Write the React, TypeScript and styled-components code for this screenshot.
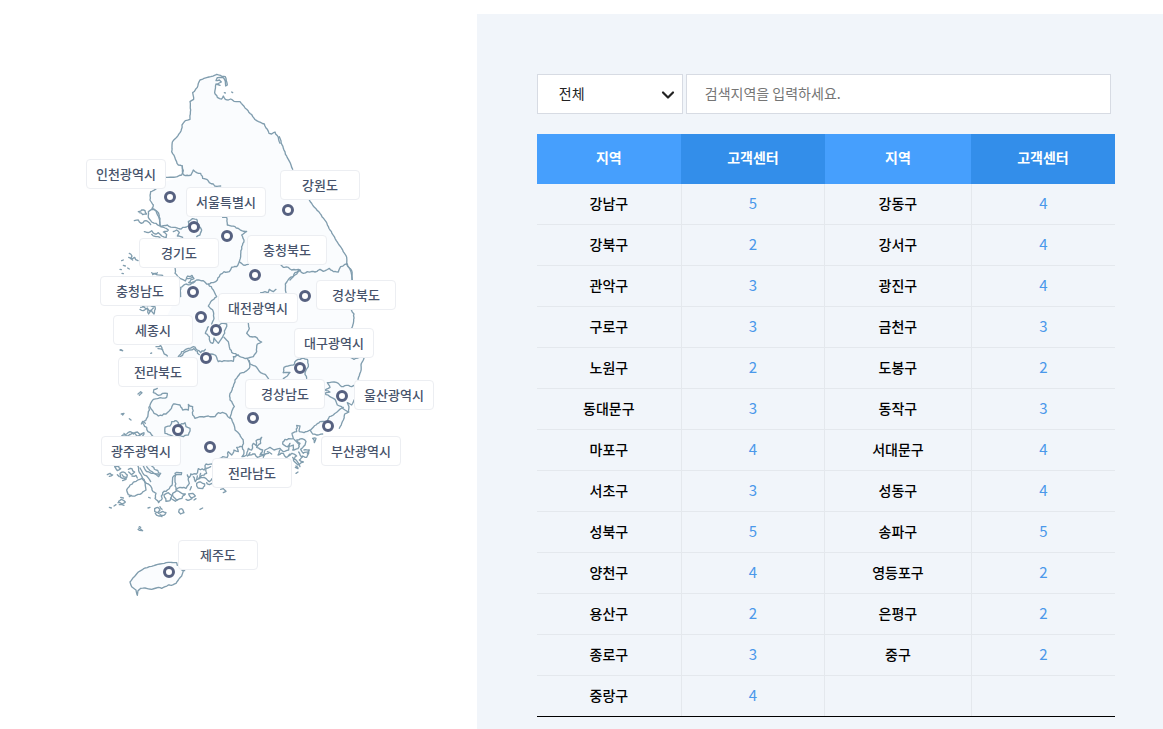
import React from 'react';
import styled, { createGlobalStyle } from 'styled-components';

const GlobalStyle = createGlobalStyle`
  *, *::before, *::after { box-sizing: border-box; }
  body {
    margin: 0;
    background: #fff;
    color: #000;
    font-family: "Noto Sans CJK KR", "Noto Sans", sans-serif;
    font-size: 14px;
  }
  button, input, select { font-family: inherit; }
`;

const Page = styled.main`
  display: flex;
  align-items: flex-start;
  padding-top: 14px;
`;

const MapPanel = styled.section`
  flex: 0 0 41%;
  padding: 46px 0 0 60px;
`;

const MapCanvas = styled.div`
  position: relative;
  width: 380px;
  height: 560px;
`;

const MapDrawing = styled.svg`
  display: block;
  width: 100%;
  height: 100%;
`;

const RegionLabel = styled.button<{ $x: number; $y: number }>`
  position: absolute;
  left: ${(p) => p.$x - 60}px;
  top: ${(p) => p.$y - 60}px;
  width: 80px;
  height: 30px;
  padding: 0;
  border: 1px solid #eceef2;
  border-radius: 4px;
  background: #fff;
  color: #47536b;
  font-size: 13px;
  font-weight: 500;
  line-height: 28px;
  text-align: center;
  white-space: nowrap;
  cursor: pointer;
`;

const Pin = styled.span<{ $x: number; $y: number }>`
  position: absolute;
  left: ${(p) => p.$x - 66}px;
  top: ${(p) => p.$y - 66}px;
  width: 12px;
  height: 12px;
  border: 3px solid #566180;
  border-radius: 50%;
  background: #fff;
`;

const ListPanel = styled.section`
  flex: 1;
  min-width: 0;
  padding: 60px 48px 12px 60px;
  background: #f1f5fa;
`;

const SearchBar = styled.form`
  display: flex;
  gap: 3px;
  margin: 0 4px 20px 0;
`;

const SelectBox = styled.div`
  position: relative;
  flex: 0 0 146px;
`;

const RegionSelect = styled.select`
  display: block;
  width: 100%;
  height: 40px;
  padding: 0 32px 2px 21px;
  border: 1px solid #d7dbe3;
  border-radius: 0;
  background: #fff;
  color: #222;
  font-size: 14px;
  appearance: none;
`;

const SelectArrow = styled.svg`
  position: absolute;
  top: 16px;
  right: 8px;
  width: 14px;
  height: 10px;
  pointer-events: none;
`;

const SearchInput = styled.input`
  flex: 1;
  min-width: 0;
  height: 40px;
  padding: 0 18px 2px;
  border: 1px solid #d7dbe3;
  border-radius: 0;
  background: #fff;
  color: #222;
  font-size: 14px;
  &::placeholder { color: #757575; opacity: 1; }
`;

const CenterTable = styled.table`
  width: 100%;
  table-layout: fixed;
  border-collapse: separate;
  border-spacing: 0;
  border-bottom: 1px solid #000;
`;

const WideCol = styled.col`
  width: 146px;
`;

const HeadCell = styled.th<{ $dark?: boolean }>`
  height: 50px;
  padding: 0 0 4px;
  background: ${(p) => (p.$dark ? '#338eea' : '#469ffd')};
  color: #fff;
  font-size: 14px;
  font-weight: 700;
  line-height: 20px;
`;

const NameCell = styled.td`
  height: 41px;
  padding: 0 0 2px;
  font-size: 14px;
  font-weight: 500;
  line-height: 20px;
  text-align: center;
`;

const CountCell = styled.td<{ $closed?: boolean }>`
  height: 41px;
  padding: 0 0 2px;
  border-left: 1px solid #e4e8ed;
  border-right: ${(p) => (p.$closed ? '1px solid #e4e8ed' : '0')};
  color: #4a98ea;
  font-size: 15px;
  line-height: 20px;
  text-align: center;
`;

const BodyRow = styled.tr`
  &:not(:last-child) > td { border-bottom: 1px solid #e4e8ed; }
  &:last-child > td { height: 40px; }
`;

type Region = { name: string; x: number; y: number; px: number; py: number };

const regions: Region[] = [
  { name: '인천광역시', x: 86, y: 159, px: 170, py: 197 },
  { name: '서울특별시', x: 186, y: 187, px: 194, py: 227 },
  { name: '강원도', x: 280, y: 170, px: 288, py: 210 },
  { name: '경기도', x: 139, y: 238, px: 227, py: 236 },
  { name: '충청북도', x: 247, y: 235, px: 255, py: 275 },
  { name: '충청남도', x: 100, y: 276, px: 193, py: 292 },
  { name: '경상북도', x: 316, y: 280, px: 305, py: 296 },
  { name: '대전광역시', x: 218, y: 293, px: 216, py: 330 },
  { name: '세종시', x: 113, y: 315, px: 201, py: 317 },
  { name: '대구광역시', x: 294, y: 328, px: 300, py: 368 },
  { name: '전라북도', x: 118, y: 357, px: 206, py: 358 },
  { name: '경상남도', x: 245, y: 379, px: 253, py: 418 },
  { name: '울산광역시', x: 354, y: 380, px: 342, py: 396 },
  { name: '광주광역시', x: 101, y: 436, px: 178, py: 430 },
  { name: '부산광역시', x: 321, y: 436, px: 328, py: 426 },
  { name: '전라남도', x: 212, y: 458, px: 210, py: 447 },
  { name: '제주도', x: 178, y: 540, px: 169, py: 572 },
];

const rows: [string, number, string?, number?][] = [
  ['강남구', 5, '강동구', 4],
  ['강북구', 2, '강서구', 4],
  ['관악구', 3, '광진구', 4],
  ['구로구', 3, '금천구', 3],
  ['노원구', 2, '도봉구', 2],
  ['동대문구', 3, '동작구', 3],
  ['마포구', 4, '서대문구', 4],
  ['서초구', 3, '성동구', 4],
  ['성북구', 5, '송파구', 5],
  ['양천구', 4, '영등포구', 2],
  ['용산구', 2, '은평구', 2],
  ['종로구', 3, '중구', 2],
  ['중랑구', 4],
];

// Each sheet holds outlines drawn at three times the map's scale.
type Sheet = { x: number; y: number; rough: number; lines: string[] };

const sheets: Sheet[] = [
  {
    x: 80, y: 60, rough: 2,
    lines: [
      '258,352 292,350 305,345 310,332 307,318 295,315 275,275 277,246 290,232 303,213 306,195 316,182 330,178 332,150 330,125 341,118 338,98 352,82 360,60 372,55 392,50 410,43 425,49 436,50 442,75 437,78 436,65 428,52 412,53 408,62 418,60 424,66 412,72 420,76 408,72 404,98 412,112 425,117 430,108 436,118 445,120 452,117 462,124 480,125 500,148 530,182 553,192 562,208 567,220 575,222 585,216 595,232 600,250',
      '307,318 308,340 316,347 333,345 340,330 350,338 362,340 368,355 380,358 388,368 400,372 404,378 422,378',
      '433,98 436,99', '455,96 458,98',
    ],
  },
  {
    x: 220, y: 60, rough: 2,
    lines: [
      '178,230 190,265 205,298 218,328',
      '268,420 280,438 300,460 318,485 330,510 345,535 365,565 380,592 380,612 395,632 396,660',
      '8,472 20,472 22,495 45,500 65,512 80,514 65,525 72,540 65,560 62,590 58,605 70,615 85,613',
      '58,605 50,620 35,622',
      '183,615 190,622 205,622 215,630 235,628 250,640 262,635 285,636 300,628 310,634 328,625 340,635 355,636 362,620 380,612',
      '240,630 225,638 218,652 210,660',
    ],
  },
  {
    x: 80, y: 180, rough: 3,
    lines: [
      '228,27 212,35 210,60 220,75 216,85 232,95 240,115 243,140',
      '205,95 215,88 228,92 236,110 239,138 228,130 215,126 205,112 205,95',
      '175,95 185,90 195,92 200,102 188,104 178,98', '163,122 175,120 184,130 198,122 208,128 212,134',
      '193,155 205,158 215,152 225,162 235,158 245,168 258,172', '215,163 228,170 240,172',
      '243,140 255,144 265,150 250,156 260,164 258,172',
      '243,140 262,135 280,142 300,147 315,142 325,138 325,125 338,116 350,118 352,130 365,150 360,165 350,170',
      '280,155 290,150 298,158 292,168 308,172',
      '285,262 285,280 300,295 316,303 320,292 336,286 342,296 332,300 326,308 345,305',
      '320,296 338,292', '302,350 302,322 318,312 330,314 350,300 370,302 380,312 400,308 412,300 418,290 432,275 448,275 455,262',
      '385,312 400,330 410,350 395,362 385,378 400,395 402,415 395,432',
      '385,440 376,460 388,470 390,484 398,490 402,474 415,490 425,475 434,460 440,432 425,430 418,435',
      '432,472 445,485 450,508 460,520 480,530 501,535',
      '294,532 305,515 325,505 340,500 352,510 362,518 376,508',
      '298,536 310,520 328,510 342,506 358,524',
      '392,522 405,525 415,545 432,542 460,544 460,530 475,525',
      '228,500 242,497 250,515 262,528', '234,506 248,508',
      '182,382 198,376 225,380 222,402 214,390 206,402 202,384 190,392 180,388', '190,380 210,394 220,384',
      '148,220 156,228 152,236 164,232 174,242', '146,232 158,240',
      '215,278 230,284 248,286', '218,284 232,278',
      '125,242 130,240', '130,256 136,258', '120,268 124,269', '143,264 148,267', '126,280 130,281', '122,509 127,512', '212,520 215,519',
    ],
  },
  {
    x: 230, y: 240, rough: 2,
    lines: [
      '352,72 363,95 367,120', '168,158 166,132 178,115 195,105 210,92',
      '92,158 105,155 115,157 118,148 130,155 138,148',
      '364,210 372,222 370,250 365,265', '363,353 372,358 388,352', '402,355 393,375 392,395 384,418',
      '55,250 58,265 50,280 60,290 75,290 85,300 95,306 82,312 80,335 70,350 51,355',
      '58,362 60,372 80,382 92,398 105,403 116,417',
      '160,398 162,382 175,378 190,375 198,362 215,355 232,358 235,380 225,398 230,415', '160,398 180,397 172,408 160,416',
      '372,436 365,440 350,436 335,440 325,430 312,426 292,428 300,442 285,450 300,456 285,460 300,470 315,478 322,495 335,500 345,510 356,516',
      '372,480 365,495 352,488 357,500 356,516 344,522 340,540 328,565',
      '340,502 322,515 310,525 298,530 290,545 270,545 258,555 250,562 242,570',
    ],
  },
  {
    x: 80, y: 340, rough: 3,
    lines: [
      '501,55 509,72 508,85 495,95 480,100 465,120 460,140 450,160 450,180 463,200 455,215 450,232 460,250 465,270 480,285 490,305 487,320',
      '232,145 222,148 220,158 235,166 248,160 262,160 260,172 235,175 220,178 212,190 205,215 200,235 187,248 200,262 204,275 218,288',
      '210,200 222,220 235,228 258,222 270,210 280,192 300,195 308,210 325,210 325,193 338,200 338,225 345,235 360,230 385,228 405,230 415,218 435,220 450,235',
      '255,280 255,262 270,258 275,245 290,243 300,255 315,248 318,260 330,265 325,285 310,290 295,286 280,290 265,284 255,280',
      '184,252 188,244 196,250',
      '125,288 140,282 150,275 160,282 172,276 180,284 192,278 188,288', '132,280 145,288 158,278 170,288 186,282',
      '487,320 470,322 475,335 462,330 455,345 445,335 442,352 428,350 420,355',
      '487,320 492,340 486,350 500,345 505,325 515,330 520,310 530,318 528,302 545,292 542,310 530,322 548,330 540,345 565,340',
      '397,372 378,372 372,390 355,386 350,402 332,402 328,412 322,405 328,430 318,445 300,442 288,450 285,420 285,400 305,398 304,404 290,404 278,412 276,436 262,450 248,458 244,480 236,488 225,475 228,460 216,450 212,438 200,430 186,410 176,392 174,378',
      '190,378 200,395 220,400 236,410 242,400 228,390 215,378', '200,380 210,392 226,402 238,404', '180,384 190,402 200,408 212,425',
      '140,450 150,435 165,425 185,415 195,425 198,450 185,460 165,468 145,464 140,450',
      '252,465 265,458 275,466 270,482 258,484 252,465', '278,460 290,452 302,458 316,462 306,475 292,480 280,470 278,460',
      '272,474 286,484 296,478', '350,430 362,426 374,432 368,446 354,444 350,430', '352,418 366,406 380,400 378,385 392,380', '362,400 356,415 372,412 388,425 396,416',
      '340,410 346,425 352,408', '380,428 388,434 396,430', '326,462 338,460 346,468 334,474 326,462', '318,478 328,480 336,476', '330,450 334,440',
      '224,506 234,502 240,510 234,518 224,514 224,506', '236,520 248,514 258,518 252,526 240,524', '226,520 236,528 246,530', '240,500 246,508',
      '298,508 308,508 312,518 302,522 296,516 298,508',
      '120,400 130,396 142,405 136,418 122,412 120,400', '126,404 138,412', '145,388 156,386 164,396 154,404 146,396', '104,380 116,378 122,386 112,392 104,380',
      '82,404 90,400 98,405 88,409', '112,404 118,410', '128,422 138,418', '156,408 168,406 172,414',
      '116,484 124,478 136,486 126,492 114,488', '118,494 132,496', '122,472 130,474', '88,502 94,504', '102,498 108,494', '148,470 154,466',
      '174,162 182,155 186,158 178,166', '124,222 132,220 128,225', '148,236 153,240', '120,30 128,32', '174,568 186,572', '178,560 182,562',
      '422,448 430,446 438,454 430,458', '360,508 368,504', '342,480 348,476', '204,504 210,502', '206,472 211,474',
    ],
  },
  {
    x: 230, y: 370, rough: 3,
    lines: [
      '278,192 265,195 248,192 240,180 222,188 208,185 210,168 200,166 200,185 186,190 190,206 165,208 158,222 172,230 180,220 176,240 160,245 150,235 132,240 120,232 105,240 100,262',
      '112,245 125,252', '60,248 52,258 75,252 82,262 100,256', '150,240 144,255 160,250 168,262 180,252',
      '172,230 190,225 188,240 204,236 210,220 200,210 216,206 228,214 222,228 212,238 220,250 236,246 230,262 218,258 208,270 220,276 204,285 190,270 200,258 186,250 176,258',
      '192,208 206,222', '188,262 204,278 210,290', '222,240 238,240 232,252', '206,246 216,262', '196,292 204,296 198,288',
      '248,205 258,205 253,218 248,205', '198,310 204,306',
    ],
  },
  {
    x: 100, y: 500, rough: 1,
    lines: [
      '232,196 230,188 205,187 180,192 155,199 135,204 115,216 98,235 90,246 95,260 108,270 112,286 114,272 122,265 135,264 155,268 175,262 185,265 205,255 214,256 228,250 235,240 245,228 250,212 246,211 254,212',
      '116,84 128,92',
    ],
  },
];

const mainland =
  '216,74 204,77 197,87 192,101 190,119 185,123 172,142 173,155 182,170 183,177 152,185 150,200 160,227 175,232 175,270 186,280 180,290 160,330 165,350 155,390 150,410 142,423 145,440 140,462 152,484 160,500 172,486 188,490 200,474 212,464 240,450 260,450 300,455 310,432 330,432 342,422 350,405 358,390 364,358 352,330 354,290 352,275 346,258 320,215 300,185 279,136 268,130 240,102 222,99 215,92 218,78';

const jeju =
  '178,564 168,563 145,568 130,582 136,591 152,589 168,585 178,579 183,571';

function noise(a: number, b: number) {
  const v = Math.sin(a * 12.9898 + b * 78.233) * 43758.5453;
  return v - Math.floor(v) - 0.5;
}

// Breaks long straight runs into short, slightly uneven coast segments.
function coastPath(points: string, rough: number) {
  const list = points.split(' ').map((p) => p.split(',').map(Number));
  let d = `M${list[0][0]} ${list[0][1]}`;
  for (let i = 1; i < list.length; i++) {
    const [x0, y0] = list[i - 1];
    const [x1, y1] = list[i];
    const steps = Math.max(1, Math.round(Math.hypot(x1 - x0, y1 - y0) / 6));
    for (let s = 1; s <= steps; s++) {
      const t = s / steps;
      const k = s === steps ? 0 : rough * 1.4;
      const x = x0 + (x1 - x0) * t + noise(x0 + s, y1) * k;
      const y = y0 + (y1 - y0) * t + noise(y0, x1 + s) * k;
      d += `L${x.toFixed(1)} ${y.toFixed(1)}`;
    }
  }
  return d;
}

function KoreaMap() {
  return (
    <MapDrawing viewBox="60 60 380 560" aria-hidden="true">
      <polygon points={mainland} fill="#fafcfe" />
      <polygon points={jeju} fill="#fafcfe" />
      {sheets.map((sheet, i) => (
        <g
          key={i}
          transform={`translate(${sheet.x} ${sheet.y}) scale(0.33333)`}
          fill="none"
          stroke="#809dae"
          strokeWidth="4"
          strokeLinejoin="round"
          strokeLinecap="round"
        >
          {sheet.lines.map((line, j) => (
            <path key={j} d={coastPath(line, sheet.rough)} />
          ))}
        </g>
      ))}
    </MapDrawing>
  );
}

export default function App() {
  return (
    <>
      <GlobalStyle />
      <Page>
        <MapPanel aria-label="지역 지도">
          <MapCanvas>
            <KoreaMap />
            {regions.map((r) => (
              <RegionLabel key={r.name} type="button" $x={r.x} $y={r.y}>
                {r.name}
              </RegionLabel>
            ))}
            {regions.map((r) => (
              <Pin key={r.name} $x={r.px} $y={r.py} />
            ))}
          </MapCanvas>
        </MapPanel>
        <ListPanel>
          <SearchBar onSubmit={(e) => e.preventDefault()}>
            <SelectBox>
              <RegionSelect aria-label="지역 선택" defaultValue="all">
                <option value="all">전체</option>
              </RegionSelect>
              <SelectArrow viewBox="0 0 14 10" aria-hidden="true">
                <path d="M2 2.5 7 7.5 12 2.5" fill="none" stroke="#222" strokeWidth="2.2" strokeLinecap="round" strokeLinejoin="round" />
              </SelectArrow>
            </SelectBox>
            <SearchInput type="text" aria-label="검색지역" placeholder="검색지역을 입력하세요." />
          </SearchBar>
          <CenterTable>
            <colgroup>
              <col />
              <col />
              <WideCol />
              <col />
            </colgroup>
            <thead>
              <tr>
                <HeadCell scope="col">지역</HeadCell>
                <HeadCell scope="col" $dark>고객센터</HeadCell>
                <HeadCell scope="col">지역</HeadCell>
                <HeadCell scope="col" $dark>고객센터</HeadCell>
              </tr>
            </thead>
            <tbody>
              {rows.map(([a, an, b, bn]) => (
                <BodyRow key={a}>
                  <NameCell>{a}</NameCell>
                  <CountCell $closed>{an}</CountCell>
                  <NameCell>{b}</NameCell>
                  <CountCell>{bn}</CountCell>
                </BodyRow>
              ))}
            </tbody>
          </CenterTable>
        </ListPanel>
      </Page>
    </>
  );
}
